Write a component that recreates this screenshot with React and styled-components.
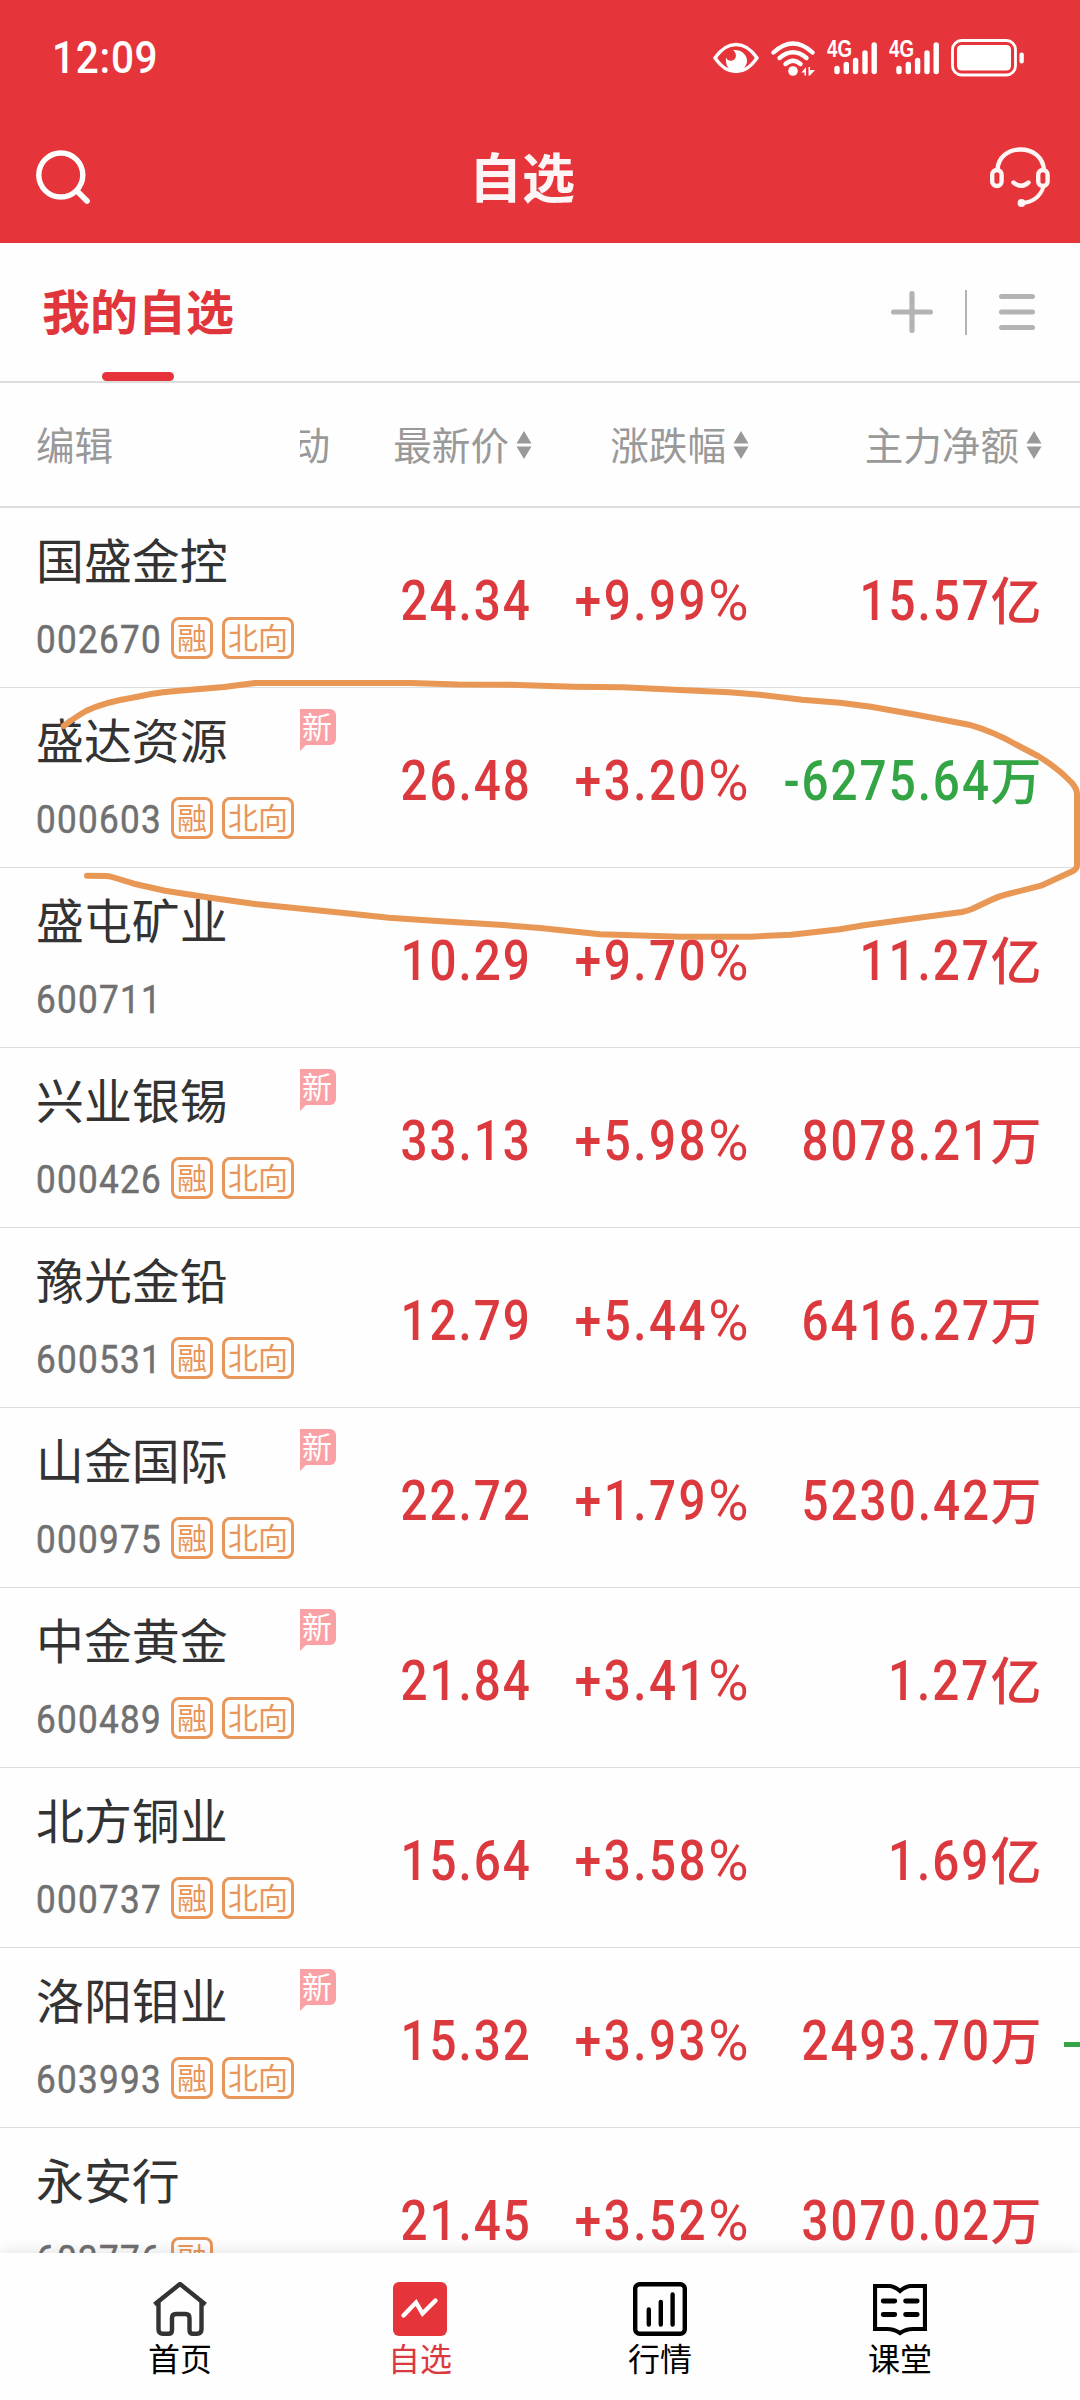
import React from "react";
import styled, { createGlobalStyle } from "styled-components";

const GlobalStyle = createGlobalStyle`
  * {
    box-sizing: border-box;
  }
  body {
    margin: 0;
    background: #fefefe;
    font-family: "Noto Sans CJK SC", "Noto Sans", sans-serif;
  }
`;

const Screen = styled.div`
  position: relative;
  display: flex;
  flex-direction: column;
  width: 1080px;
  height: 2400px;
  overflow: hidden;
  background: #fefefe;
`;

const Header = styled.header`
  height: 243px;
  flex: none;
  background: #e5353a;
  color: #fff;
`;

const StatusBar = styled.div`
  display: flex;
  align-items: center;
  justify-content: space-between;
  height: 113px;
  padding: 3px 56px 0 52px;
`;

const Clock = styled.span`
  font: 500 45px/50px Roboto, sans-serif;
  letter-spacing: 0.8px;
  transform: scaleX(0.9);
  transform-origin: left;
`;

const StatusIcons = styled.div`
  display: flex;
  align-items: center;
`;

const NavBar = styled.div`
  display: flex;
  align-items: center;
  height: 130px;
  padding: 0 28px 2px 34px;
`;

const Title = styled.h1`
  flex: 1;
  margin: -4px 0 0;
  padding-right: 38px;
  text-align: center;
  color: #fdf5f5;
  font-size: 53px;
  line-height: 60px;
  font-weight: 700;
`;

const TabBar = styled.div`
  display: flex;
  justify-content: space-between;
  flex: none;
  height: 140px;
  padding: 0 44px 0 42px;
  border-bottom: 2px solid #ddd;
`;

const Tab = styled.div`
  display: flex;
  flex-direction: column;
  align-items: center;
  justify-content: space-between;
  padding-top: 36px;
  color: #e0363b;
  font-size: 48px;
  line-height: 60px;
  font-weight: 700;

  &::after {
    content: "";
    width: 72px;
    height: 9px;
    border-radius: 5px;
    background: #e5353a;
  }
`;

const TabTools = styled.div`
  display: flex;
  align-items: center;
  height: 138px;
`;

const ToolDivider = styled.i`
  width: 2px;
  height: 45px;
  margin: 0 31px;
  background: #b3b3b3;
`;

const columns = "300px 232px 218px 290px 40px";

const TableHead = styled.div`
  display: grid;
  grid-template-columns: ${columns};
  align-items: center;
  flex: none;
  height: 125px;
  padding-bottom: 3px;
  border-bottom: 2px solid #ddd;
  color: #999;
  font-size: 38.6px;
  line-height: 50px;
`;

const EditCell = styled.div`
  padding-left: 36px;
`;

const HeadCell = styled.div`
  display: flex;
  align-items: center;
  justify-content: flex-end;
  gap: 7px;
  margin-right: ${({ $end }) => $end || 0}px;
  white-space: nowrap;
`;

/* tail of the column that is scrolled under the name column */
const ScrolledHead = styled.span`
  display: flex;
  justify-content: flex-end;
  width: 30px;
  margin-right: auto;
  overflow: hidden;
`;

const List = styled.div`
  flex: 1;
  min-height: 0;
  overflow: hidden;
`;

const Row = styled.div`
  display: grid;
  grid-template-columns: ${columns};
  height: 180px;
  border-bottom: 1px solid #ddd;
`;

const NameCell = styled.div`
  padding: 22px 0 0 36px;
`;

const Name = styled.div`
  color: #333;
  font-size: 47.9px;
  line-height: 56px;
`;

const Meta = styled.div`
  display: flex;
  align-items: center;
  height: 42px;
  margin-top: 31px;
`;

const Code = styled.span`
  flex: none;
  width: 135px;
  padding-top: 3px;
  color: #707070;
  font: 400 39px/42px Roboto, sans-serif;
  -webkit-text-stroke: 0.5px #707070;
  letter-spacing: 1.4px;
  white-space: nowrap;

  span {
    display: inline-block;
    transform: scaleX(0.9);
    transform-origin: left;
  }
`;

const Tag = styled.span`
  flex: none;
  width: ${({ $wide }) => ($wide ? 72 : 42)}px;
  height: 42px;
  margin-right: 9px;
  border: 3px solid #e8965a;
  border-radius: 8px;
  color: #e8965a;
  font-size: 30px;
  line-height: 32px;
  text-align: center;
  white-space: nowrap;
`;

const ValueCell = styled.div`
  display: flex;
  justify-content: flex-end;
  align-items: baseline;
  position: relative;
  margin-right: ${({ $end }) => $end || 0}px;
  padding-top: 61px;
  color: ${({ $down }) => ($down ? "#34a545" : "#dc393e")};
  font: 500 55px/64px Roboto, sans-serif;
  white-space: nowrap;
`;

const Figure = styled.span`
  letter-spacing: ${({ $spacing }) => $spacing || 2.3}px;
  transform: scaleX(0.865);
  transform-origin: right;
`;

const Unit = styled.span`
  font: 500 51px/1px "Noto Sans CJK SC", sans-serif;
`;

const Percent = styled.span`
  font-weight: 400;
`;

const NewBadge = styled.span`
  position: absolute;
  left: 0;
  top: 21px;
  width: 36px;
  height: 36px;
  padding-right: 2px;
  border-radius: 0 6px 6px 0;
  background: #f9a1a4;
  color: #fff;
  font: 400 30px/33px "Noto Sans CJK SC", sans-serif;
  text-align: center;

  &::after {
    content: "";
    position: absolute;
    left: 0;
    top: 36px;
    border-top: 6px solid #f9a1a4;
    border-right: 6px solid transparent;
  }
`;

const NextColumn = styled.div`
  align-self: start;
  justify-self: end;
  width: 16px;
  height: 5px;
  margin-top: 94px;
  background: #34a545;
`;

const BottomNav = styled.nav`
  display: flex;
  flex: none;
  position: relative;
  height: 147px;
  padding: 29px 60px 0;
  background: #fefefe;
  box-shadow: 0 -2px 14px rgba(0, 0, 0, 0.1);
`;

const NavItem = styled.div`
  flex: 1;
  display: flex;
  flex-direction: column;
  align-items: center;
  color: ${({ $active }) => ($active ? "#dc393e" : "#000")};
  font-size: 32px;
  line-height: 40px;
  gap: 1px;
`;

const Marker = styled.svg`
  position: absolute;
  left: 0;
  top: 0;
  pointer-events: none;
`;

const SearchIcon = () => (
  <svg width="60" height="60" viewBox="0 0 60 60" fill="none" stroke="#fff">
    <circle cx="26.8" cy="28" r="22" strokeWidth="5.4" />
    <path d="M43 44L53 54" strokeWidth="5.6" strokeLinecap="round" />
  </svg>
);

const HeadsetIcon = () => (
  <svg width="64" height="64" viewBox="0 0 64 64" fill="none" stroke="#fff5f5" strokeWidth="4.4" strokeLinecap="round">
    <path d="M9.5 25C10 12 20 4.5 32.5 4.5S55 12 56 25" />
    <rect x="4.2" y="25" width="9.4" height="16" rx="4.7" />
    <rect x="50.2" y="25" width="9.4" height="16" rx="4.7" />
    <path d="M25.5 37.5Q33 44 40.5 37.5" />
    <path d="M55.5 42Q50 57 34 58" strokeWidth="3.8" />
    <circle cx="33.5" cy="58" r="3.9" fill="#fff5f5" stroke="none" />
  </svg>
);

const EyeIcon = () => (
  <svg width="46" height="38" viewBox="0 0 46 38">
    <path d="M2 19C9 9 15 5.5 23 5.5S37 9 44 19C37 29 31 32.5 23 32.5S9 29 2 19Z" fill="none" stroke="#fff" strokeWidth="3.6" strokeLinejoin="round" />
    <path d="M20 11C29 10 35 17 34 23C33 28 29 32.5 23 32.5C16 32.5 12 26 13 18.5C14 21 17 22.5 19.5 21.5C24 20 24 14 20 11Z" fill="#fff" />
  </svg>
);

const WifiIcon = () => (
  <svg width="46" height="38" viewBox="0 0 46 38" fill="none" stroke="#fff" strokeWidth="4.4" strokeLinecap="round">
    <path d="M3.5 13.5Q23 -4.5 42.5 13.5" />
    <path d="M9.5 19Q23 7.5 36.5 19" />
    <path d="M15.5 25Q23 18.5 30.5 25" />
    <circle cx="23" cy="32" r="4.8" fill="#fff" stroke="none" />
    <path d="M31.5 33.5L36 28V36.5H34.5V33.5ZM38.5 28L40 28V31H45L40 36.5H38.5Z" fill="#fff" stroke="none" />
  </svg>
);

const SignalBox = styled.div`
  position: relative;
  width: 50px;
  height: 38px;
  margin-right: 12px;
`;

const Network = styled.span`
  position: absolute;
  left: 0;
  top: -2px;
  font: 700 24px/24px "Liberation Sans", sans-serif;
  transform: scaleX(0.78);
  transform-origin: left;
`;

const Signal = () => (
  <SignalBox>
    <svg width="50" height="38" viewBox="0 0 50 38" stroke="#fff" strokeWidth="5.4" strokeLinecap="round">
      <path d="M10 29.5V32.5M19.3 25.5V32.5M28.6 21.5V32.5M38 14V32.5M47.2 6V32.5" />
    </svg>
    <Network>4G</Network>
  </SignalBox>
);

const BatteryIcon = () => (
  <svg width="73" height="38" viewBox="0 0 73 38" fill="none">
    <rect x="1.5" y="1.5" width="63" height="34.5" rx="9" stroke="#fff" strokeWidth="2.8" />
    <rect x="6" y="6" width="54" height="25.5" rx="4.5" fill="#fff" />
    <rect x="68.5" y="13.5" width="4.3" height="11" rx="2" fill="#fff" />
  </svg>
);

const SortArrows = styled.svg`
  margin-top: 3px;
`;

const SortIcon = () => (
  <SortArrows width="16" height="28" viewBox="0 0 16 28" fill="#999">
    <path d="M8 0L15.5 12.5H0.5ZM8 28L0.5 15.5H15.5Z" />
  </SortArrows>
);

const PlusIcon = () => (
  <svg width="44" height="44" viewBox="0 0 44 44" stroke="#b3b3b3" strokeWidth="5.2" strokeLinecap="round">
    <path d="M22 3.6V40.4M3.6 22H40.4" />
  </svg>
);

const MenuIcon = () => (
  <svg width="38" height="38" viewBox="0 0 38 38" stroke="#b3b3b3" strokeWidth="5" strokeLinecap="round">
    <path d="M3.5 3.5H34.5M3.5 19H34.5M3.5 34.5H34.5" />
  </svg>
);

const HomeIcon = () => (
  <svg width="54" height="54" viewBox="0 0 54 54" fill="none" stroke="#333" strokeWidth="4.4" strokeLinejoin="round">
    <path d="M1.5 22.5L27 2L52.5 22.5" />
    <path d="M5.5 19.5V47Q5.5 51.8 10 51.8H15.5Q19 51.8 19 48V36Q19 32 23 32H32.5Q36.5 32 36.5 36V48Q36.5 51.8 40 51.8H44Q48.5 51.8 48.5 47V19.5" />
  </svg>
);

const TrendIcon = () => (
  <svg width="54" height="54" viewBox="0 0 54 54" fill="none">
    <rect width="54" height="54" rx="6" fill="#e5353a" />
    <path d="M10.5 33.5L23 20.5L29.5 31.5L42.5 18.5" stroke="#fff" strokeWidth="4.4" strokeLinecap="round" />
  </svg>
);

const ChartIcon = () => (
  <svg width="54" height="54" viewBox="0 0 54 54" fill="none" stroke="#000" strokeWidth="4.4" strokeLinecap="round">
    <rect x="2.2" y="2.2" width="49.6" height="49.6" rx="4.5" />
    <path d="M15.8 27.5V42.5M27.8 20V42.5M39.6 12.5V42.5" />
  </svg>
);

const BookIcon = () => (
  <svg width="54" height="54" viewBox="0 0 54 54" fill="none" stroke="#000" strokeWidth="4.2">
    <path d="M27 9Q21 4 16 4H2V47H14Q21 47 27 51Q33 47 40 47H52V4H38Q33 4 27 9Z" />
    <path d="M10.2 19H21.8M32.6 19H44.2M10.2 32.5H21.8M32.6 32.5H44.2" strokeWidth="4.8" strokeLinecap="round" />
  </svg>
);

const stocks = [
  { name: "国盛金控", code: "002670", tags: ["融", "北向"], price: "24.34", change: "+9.99", flow: "15.57", unit: "亿" },
  { name: "盛达资源", code: "000603", tags: ["融", "北向"], isNew: true, price: "26.48", change: "+3.20", flow: "-6275.64", unit: "万" },
  { name: "盛屯矿业", code: "600711", tags: [], price: "10.29", change: "+9.70", flow: "11.27", unit: "亿" },
  { name: "兴业银锡", code: "000426", tags: ["融", "北向"], isNew: true, price: "33.13", change: "+5.98", flow: "8078.21", unit: "万" },
  { name: "豫光金铅", code: "600531", tags: ["融", "北向"], price: "12.79", change: "+5.44", flow: "6416.27", unit: "万" },
  { name: "山金国际", code: "000975", tags: ["融", "北向"], isNew: true, price: "22.72", change: "+1.79", flow: "5230.42", unit: "万" },
  { name: "中金黄金", code: "600489", tags: ["融", "北向"], isNew: true, price: "21.84", change: "+3.41", flow: "1.27", unit: "亿" },
  { name: "北方铜业", code: "000737", tags: ["融", "北向"], price: "15.64", change: "+3.58", flow: "1.69", unit: "亿" },
  { name: "洛阳钼业", code: "603993", tags: ["融", "北向"], isNew: true, price: "15.32", change: "+3.93", flow: "2493.70", unit: "万", next: true },
  { name: "永安行", code: "603776", tags: ["融"], price: "21.45", change: "+3.52", flow: "3070.02", unit: "万" },
];

const StockRow = ({ stock }) => (
  <Row>
    <NameCell>
      <Name>{stock.name}</Name>
      <Meta>
        <Code>
          <span>{stock.code}</span>
        </Code>
        {stock.tags.map((tag) => (
          <Tag key={tag} $wide={tag.length > 1}>
            {tag}
          </Tag>
        ))}
      </Meta>
    </NameCell>
    <ValueCell>
      {stock.isNew && <NewBadge>新</NewBadge>}
      <Figure>{stock.price}</Figure>
    </ValueCell>
    <ValueCell $end={1.5}>
      <Figure $spacing={2.9}>{stock.change}</Figure>
      <Percent>%</Percent>
    </ValueCell>
    <ValueCell $end={-1.5} $down={stock.flow.startsWith("-")}>
      <Figure>{stock.flow}</Figure>
      <Unit>{stock.unit}</Unit>
    </ValueCell>
    {stock.next && <NextColumn />}
  </Row>
);

function App() {
  return (
    <Screen>
      <GlobalStyle />
      <Header>
        <StatusBar>
          <Clock>12:09</Clock>
          <StatusIcons>
            <EyeIcon />
            <svg width="11" height="1" />
            <WifiIcon />
            <svg width="11" height="1" />
            <Signal />
            <Signal />
            <BatteryIcon />
          </StatusIcons>
        </StatusBar>
        <NavBar>
          <SearchIcon />
          <Title>自选</Title>
          <HeadsetIcon />
        </NavBar>
      </Header>

      <TabBar>
        <Tab>我的自选</Tab>
        <TabTools>
          <PlusIcon />
          <ToolDivider />
          <MenuIcon />
        </TabTools>
      </TabBar>

      <TableHead>
        <EditCell>编辑</EditCell>
        <HeadCell>
          <ScrolledHead>动</ScrolledHead>
          最新价
          <SortIcon />
        </HeadCell>
        <HeadCell $end={1}>
          涨跌幅
          <SortIcon />
        </HeadCell>
        <HeadCell $end={-2}>
          主力净额
          <SortIcon />
        </HeadCell>
      </TableHead>

      <List>
        {stocks.map((stock) => (
          <StockRow key={stock.code} stock={stock} />
        ))}
      </List>

      <BottomNav>
        <NavItem>
          <HomeIcon />
          首页
        </NavItem>
        <NavItem $active>
          <TrendIcon />
          自选
        </NavItem>
        <NavItem>
          <ChartIcon />
          行情
        </NavItem>
        <NavItem>
          <BookIcon />
          课堂
        </NavItem>
      </BottomNav>

      {/* hand-drawn circle round the second row */}
      <Marker width="1080" height="1000" viewBox="0 0 1080 1000" fill="none" stroke="#e99755" strokeWidth="6" strokeLinecap="round" strokeLinejoin="round">
        <path d="M63.7 726Q77 716 86 711Q105 702 131 698L151 694Q163 692 176 691L224 687L255 683H411L458 684.5L510 684.7L573 686.7L623 687.3L685 690.3L729 692.3L760 694.7L802 699.7L840 702.7L871 706.7L919 715.3L969 724.7Q994 732 1015 744L1038 756Q1058 768 1072 783Q1077 789 1077 794V865Q1077 869 1073 871L1041 885.7L1008 894Q999 896 991 900L972 909Q967 911 962 912L915 918.3L864 925.3L840 929.3L791 934.7L750 936.7H681L600 934.3L540 928L499 924.7L441 921.3L389 917.7L344 913L255 904L207 897.3L165 890.7L134 883.7L112 877Q109 876 105 876L87 875.7" />
      </Marker>
    </Screen>
  );
}

export default App;
